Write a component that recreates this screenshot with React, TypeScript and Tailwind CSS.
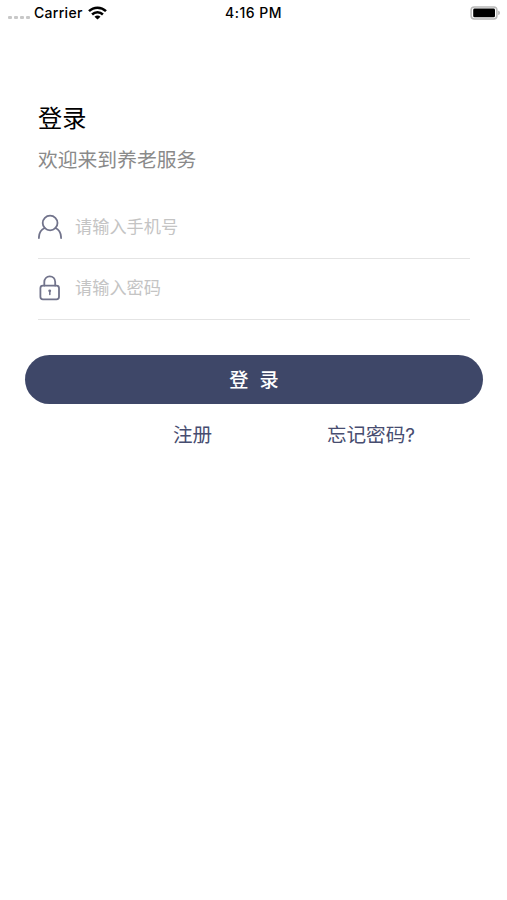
import React from "react";

const UserIcon = () => (
  <svg width="26" height="26" viewBox="0 0 26 26" fill="none" stroke="#71738b" strokeWidth="1.8" strokeLinecap="round">
    <circle cx="13.1" cy="9" r="7.4" />
    <path d="M7.8 14C4 15.5 2 19.5 1.9 24M18.4 14C22 15.5 24 19.5 24.1 24" />
  </svg>
);

const LockIcon = () => (
  <svg width="26" height="26" viewBox="0 0 26 26" fill="none" stroke="#71738b" strokeWidth="1.8" strokeLinecap="round">
    <rect x="3.4" y="10.7" width="18.6" height="13.6" rx="2.5" />
    <path d="M7.3 10.5V7C7.3 3.8 9.6 1.4 12.7 1.4S18.2 3.8 18.2 7v3.5" />
    <circle cx="12.7" cy="15.8" r="1.4" fill="#71738b" stroke="none" />
    <path d="M12.8 16v3.4" strokeWidth="1.5" />
  </svg>
);

const WifiIcon = () => (
  <svg width="19" height="14" viewBox="0 0 19 14" fill="none" stroke="#000" strokeWidth="2.5">
    <path d="M1 5.2C5.8.5 13.2.5 18 5.2" />
    <path d="M4.1 8.5C7.1 5.6 11.9 5.6 14.9 8.5" />
    <path d="M9.5 13.6L6.5 10.7C8.2 9.2 10.8 9.2 12.5 10.7Z" fill="#000" stroke="none" />
  </svg>
);

const BatteryIcon = () => (
  <svg width="31" height="14" viewBox="0 0 31 14" fill="none">
    <rect x="1.1" y="0.9" width="25.8" height="12" rx="3.2" stroke="#b8b8b8" strokeWidth="1.5" />
    <rect x="3.2" y="2.6" width="21.8" height="8.7" rx="1.4" fill="#000" />
    <path d="M28.3 4.7c2 .7 2 3.6 0 4.3z" fill="#a6a6a6" />
  </svg>
);

// 状态栏
const StatusBar = () => (
  <div className="grid h-[26px] grid-cols-3 items-center font-['Inter'] text-[14px] font-medium leading-[26px] text-black">
    <div className="flex items-center pl-2">
      <div className="mt-[9px] flex gap-[2px]">
        {[0, 1, 2, 3].map((i) => (
          <span key={i} className="h-[3px] w-[4px] rounded-[1px] bg-[#c8c8c8]" />
        ))}
      </div>
      <span className="ml-[4px] tracking-[0.3px]">Carrier</span>
      <span className="ml-[5px]">
        <WifiIcon />
      </span>
    </div>
    <div className="text-center tracking-[0.5px]">4:16 PM</div>
    <div className="flex justify-end pr-[6px]">
      <BatteryIcon />
    </div>
  </div>
);

const Field = ({ icon, type, placeholder }: { icon: React.ReactNode; type: string; placeholder: string }) => (
  <div className="flex h-[61px] items-center border-b border-[#e4e4e4] pb-[2px]">
    <div className="-ml-px">{icon}</div>
    <input
      type={type}
      placeholder={placeholder}
      className="ml-[12px] h-[30px] flex-1 text-[17.2px] outline-none placeholder:text-[#c4c4c4]"
    />
  </div>
);

const App = () => {
  return (
    <div className="h-[900px] w-[507px] overflow-hidden bg-white font-['Liberation_Sans','Noto_Sans_CJK_SC',sans-serif]">
      <StatusBar />
      <div className="pl-[38px] pr-[37px] pt-[75px]">
        <h1 className="text-[24.2px] leading-[36px] text-black">登录</h1>
        <p className="mt-[8px] text-[19.8px] leading-[30px] text-[#8a8a8a]">欢迎来到养老服务</p>
        <div className="mt-[23px]">
          <Field icon={<UserIcon />} type="text" placeholder="请输入手机号" />
          <Field icon={<LockIcon />} type="password" placeholder="请输入密码" />
        </div>
      </div>
      <button className="mx-[25px] mt-[35px] flex h-[49px] w-[458px] items-center justify-center gap-[11px] rounded-full bg-[#3e4768] pt-[4px] text-[19.2px] font-medium text-white">
        <span>登</span>
        <span>录</span>
      </button>
      <div className="mt-[16px] flex justify-between pl-[173px] pr-[92px] text-[19.6px] leading-[30px] text-[#474d70]">
        <a>注册</a>
        <a>
          忘记密码<span className="font-['Inter'] text-[19px]">?</span>
        </a>
      </div>
    </div>
  );
};

export default App;
